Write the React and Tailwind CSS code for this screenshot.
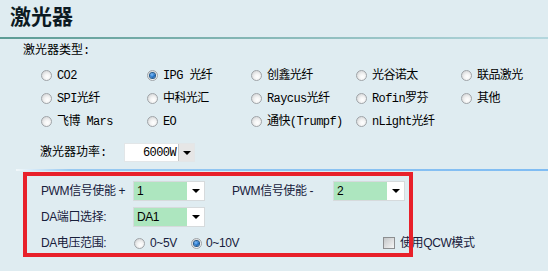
import React from "react";

const topFont = { fontFamily: '"Liberation Mono", "Noto Sans CJK SC", monospace' };

function Radio({ checked }) {
  return (
    <span className="relative inline-block w-[11px] h-[11px] rounded-full border border-[#a0a4a8] bg-[radial-gradient(circle_at_60%_65%,#ffffff_0%,#f4f4f4_35%,#c9cbcd_100%)] shrink-0">
      {checked && (
        <span className="absolute left-[2px] top-[2px] w-[5px] h-[5px] rounded-full bg-[radial-gradient(circle_at_40%_35%,#7ec0ff_0%,#1f6fc4_55%,#0b3f7a_100%)] ring-1 ring-[#235a8c]" />
      )}
    </span>
  );
}

function TopOption({ label, checked }) {
  return (
    <div className="flex items-center gap-[5px] h-[23px]">
      <Radio checked={checked} />
      <span className="text-[12px] leading-[14px] text-black tracking-[-0.6px] whitespace-nowrap" style={topFont}>
        {label}
      </span>
    </div>
  );
}

function Caret() {
  return (
    <span className="w-0 h-0 border-l-[4px] border-r-[4px] border-t-[4px] border-l-transparent border-r-transparent border-t-black" />
  );
}

function GreenSelect({ value, width = "w-[72px]" }) {
  return (
    <div className={`${width} h-[20px] flex border border-[#d6dadc] bg-white`}>
      <div className="flex-1 bg-[#ade6bf] flex items-center pl-[3px] text-[12px] text-black">{value}</div>
      <div className="w-[17px] flex items-center justify-center bg-white">
        <Caret />
      </div>
    </div>
  );
}

const rows = [
  [["CO2"], ["IPG 光纤", true], ["创鑫光纤"], ["光谷诺太"], ["联品激光"]],
  [["SPI光纤"], ["中科光汇"], ["Raycus光纤"], ["Rofin罗芬"], ["其他"]],
  [["飞博 Mars"], ["EO"], ["通快(Trumpf)"], ["nLight光纤"]],
];

export default function App() {
  return (
    <div
      className="relative w-[548px] h-[271px] overflow-hidden bg-[#dfecf1]"
      style={{ fontFamily: '"Liberation Sans", "Noto Sans CJK SC", sans-serif' }}
    >
      {/* Title */}
      <div className="h-[37px] pl-[10px] pt-[3px]">
        <h1 className="text-[21px] leading-[24px] font-semibold text-[#0c1a22]" style={{ fontFamily: '"Noto Sans CJK SC", sans-serif' }}>
          激光器
        </h1>
      </div>
      <div className="h-[2px] bg-linear-to-r from-[#5c9c95] to-[#b4d7de]" />

      {/* Laser type */}
      <div className="pl-[23px] mt-[4px] text-[12px] leading-[16px] text-black" style={topFont}>
        激光器类型:
      </div>
      <div className="ml-[41px] mt-[5px] grid grid-cols-[106px_104px_105px_105px_1fr]">
        {rows.flat().map(([label, checked], i) => (
          <TopOption key={i} label={label} checked={checked} />
        ))}
      </div>

      {/* Power */}
      <div className="flex items-center ml-[40px] mt-[10px] h-[19px]">
        <span className="w-[84px] text-[12px] text-black" style={topFont}>
          激光器功率:
        </span>
        <div className="w-[71px] h-[19px] flex border border-[#e2e6e8] bg-white">
          <div className="flex-1 flex items-center justify-end pr-[2px] text-[12px] text-black tracking-[-0.6px]" style={topFont}>
            6000W
          </div>
          <div className="w-[16px] flex items-center justify-center bg-[#e6e6e6] border-l border-[#c8c8c8]">
            <Caret />
          </div>
        </div>
      </div>

      <div className="ml-[16px] mt-[7px] h-[2px] bg-linear-to-r from-[#f2f8fa] via-[#98c9f1] via-10% to-[#7fbcf3]" />

      {/* PWM / DA settings */}
      <div className="pl-[41px] pt-[10px] flex flex-col gap-[6px] text-[12px] text-[#17203c] tracking-[-0.4px]">
        <div className="flex items-center h-[20px]">
          <span className="w-[92px] whitespace-nowrap">PWM信号使能 +</span>
          <GreenSelect value="1" />
          <span className="ml-[27px] w-[101px] whitespace-nowrap">PWM信号使能 -</span>
          <GreenSelect value="2" />
        </div>
        <div className="flex items-center h-[20px]">
          <span className="w-[92px] whitespace-nowrap">DA端口选择:</span>
          <GreenSelect value="DA1" />
        </div>
        <div className="flex items-center h-[20px]">
          <span className="w-[93px] whitespace-nowrap">DA电压范围:</span>
          <div className="w-[57px] flex items-center gap-[5px]">
            <Radio />
            <span>0~5V</span>
          </div>
          <div className="w-[192px] flex items-center gap-[4px]">
            <Radio checked />
            <span>0~10V</span>
          </div>
          <div className="flex items-center gap-[5px]">
            <span className="w-[12px] h-[12px] border border-[#8c8e90] bg-[linear-gradient(135deg,#c4c6c8,#f6f6f6)]" />
            <span className="whitespace-nowrap">使用QCW模式</span>
          </div>
        </div>
      </div>

      {/* red annotation frame */}
      <div className="absolute left-[23px] top-[172px] w-[390px] h-[85px] border-4 border-[#e8202a] pointer-events-none" />
    </div>
  );
}
